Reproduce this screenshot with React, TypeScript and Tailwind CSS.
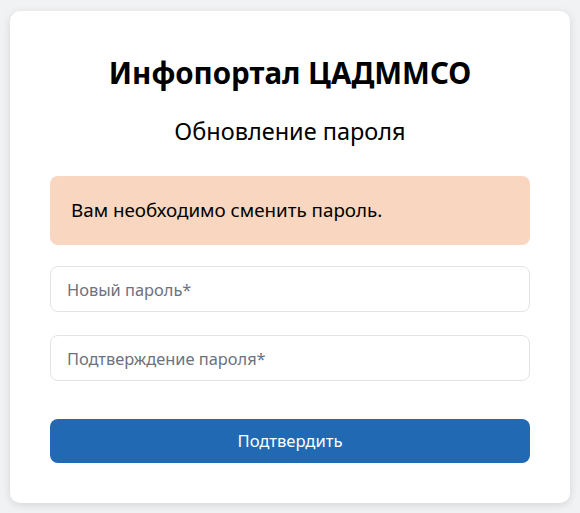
import React from 'react';

export default function App() {
  return (
    <div
      className="min-h-[513px] bg-[#f1f2f4] px-[10px] pt-[11px] pb-[10px]"
      style={{ fontFamily: '"Noto Sans", "Open Sans", sans-serif' }}
    >
      <div className="bg-white rounded-[10px] shadow-[0_2px_8px_rgba(0,0,0,0.12)] px-[40px] pt-[42px] pb-[40px]">
        <h1 className="text-center text-[29.5px] font-bold text-black leading-[40px]">
          Инфопортал ЦАДММСО
        </h1>
        <h2 className="text-center text-[23.5px] text-black leading-[32px] mt-[22px]">
          Обновление пароля
        </h2>

        {/* Alert */}
        <div className="mt-[29px] h-[69px] rounded-[8px] bg-[#f8d6c0] flex items-center px-[21px]">
          <span className="text-[18.8px] text-black">Вам необходимо сменить пароль.</span>
        </div>

        <form className="mt-[21px] flex flex-col" onSubmit={(e) => e.preventDefault()}>
          <input
            type="password"
            placeholder="Новый пароль*"
            className="h-[46px] rounded-[8px] border border-[#e3e3e3] px-[16px] text-[16.4px] placeholder-[#6b7280] outline-none"
          />
          <input
            type="password"
            placeholder="Подтверждение пароля*"
            className="mt-[23px] h-[46px] rounded-[8px] border border-[#e3e3e3] px-[16px] text-[16.4px] placeholder-[#6b7280] outline-none"
          />
          <button
            type="submit"
            className="mt-[38px] h-[44px] rounded-[8px] bg-[#2169b3] text-white text-[16.6px]"
          >
            Подтвердить
          </button>
        </form>
      </div>
    </div>
  );
}
